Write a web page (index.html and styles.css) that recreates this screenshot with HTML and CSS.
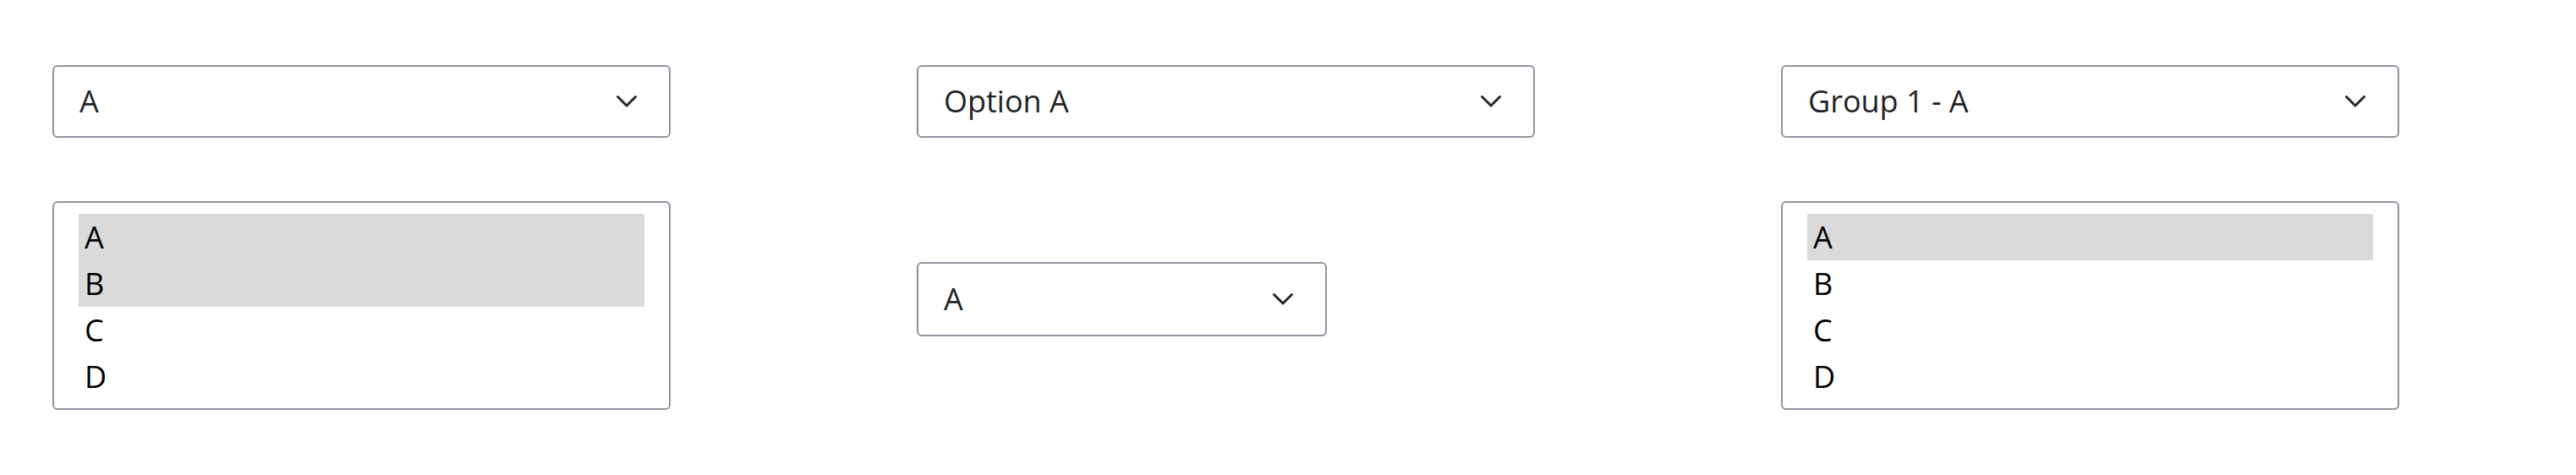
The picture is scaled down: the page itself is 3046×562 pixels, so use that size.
FILE: index.html
```html
<!DOCTYPE html>
<html lang="en">
<head>
  <meta charset="UTF-8" />
  <meta name="viewport" content="width=device-width, initial-scale=1.0"/>
  <title>Select Examples</title>
  <link rel="stylesheet" href="styles.css">
</head>
<body>
  <div class="demo">

    <div class="column">
      <div class="select">
        <span class="value">A</span>
        <svg class="chevron" viewBox="0 0 26 16"><path d="M2.5 2.5 L13 13 L23.5 2.5"/></svg>
      </div>
      <div class="listbox">
        <div class="option selected">A</div>
        <div class="option selected">B</div>
        <div class="option">C</div>
        <div class="option">D</div>
      </div>
    </div>

    <div class="column">
      <div class="select">
        <span class="value">Option A</span>
        <svg class="chevron" viewBox="0 0 26 16"><path d="M2.5 2.5 L13 13 L23.5 2.5"/></svg>
      </div>
      <div class="select small">
        <span class="value">A</span>
        <svg class="chevron" viewBox="0 0 26 16"><path d="M2.5 2.5 L13 13 L23.5 2.5"/></svg>
      </div>
    </div>

    <div class="column">
      <div class="select">
        <span class="value">Group 1 - A</span>
        <svg class="chevron" viewBox="0 0 26 16"><path d="M2.5 2.5 L13 13 L23.5 2.5"/></svg>
      </div>
      <div class="listbox">
        <div class="option selected">A</div>
        <div class="option">B</div>
        <div class="option">C</div>
        <div class="option">D</div>
      </div>
    </div>

  </div>
</body>
</html>
```

FILE: styles.css
```css
* {
  box-sizing: border-box;
  margin: 0;
  padding: 0;
}

body {
  background-color: #ffffff;
  font-family: 'Open Sans', 'Noto Sans', sans-serif;
  font-size: 36px;
  color: #1f2328;
}

.demo {
  display: flex;
  gap: 291px;
  padding: 77px 0 0 62px;
}

.column {
  width: 731px;
  display: flex;
  flex-direction: column;
  gap: 75px;
}

.select {
  height: 86px;
  display: flex;
  align-items: center;
  justify-content: space-between;
  padding: 0 37px 0 30px;
  border: 2px solid #8c959f;
  border-radius: 6px;
  background: #ffffff;
}

.select.small {
  width: 485px;
  height: 88px;
  margin-top: 72px;
}

.value {
  line-height: 54px;
}

.chevron {
  width: 26px;
  height: 16px;
  fill: none;
  stroke: #24292f;
  stroke-width: 3;
  stroke-linecap: round;
  stroke-linejoin: round;
}

.listbox {
  height: 247px;
  padding: 13px 29px 10px 29px;
  border: 2px solid #8c959f;
  border-radius: 6px;
  color: #000000;
}

.option {
  height: 55px;
  line-height: 55px;
  padding-left: 7px;
}

.option.selected {
  background-color: #dadada;
}

.option.selected + .option.selected {
  border-top: 1px solid #e3e3e3;
  line-height: 54px;
}
```
